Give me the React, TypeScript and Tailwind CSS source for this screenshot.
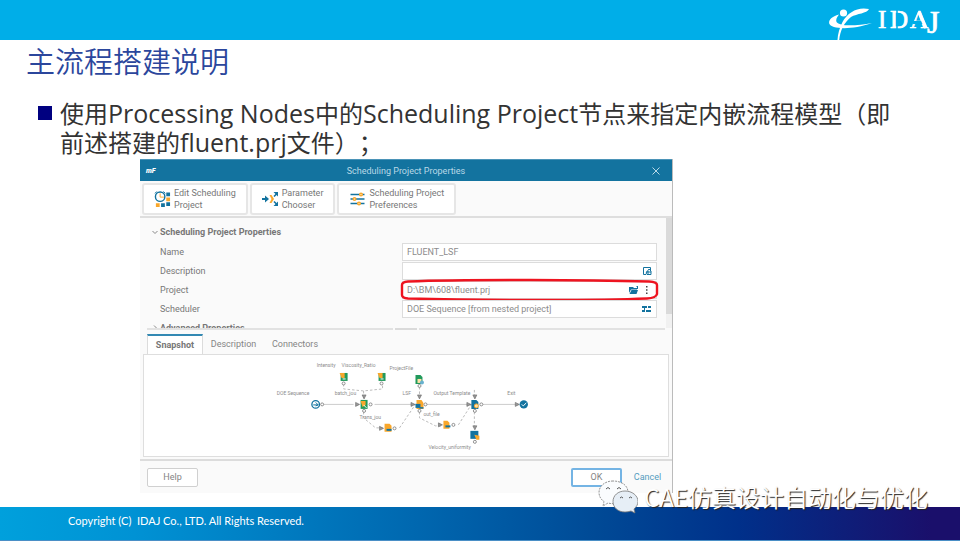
import type { ReactNode } from 'react';

const BLUE = '#13739f';
const AMBER = '#f9a72b';
const GREEN = '#229a5c';

function BrandLogo() {
  return (
    <svg viewBox="0 0 116 36" className="h-9 w-[116px]" role="img" aria-label="IDAJ">
      <circle cx="16.5" cy="9" r="3.6" fill="#fff" />
      <path d="M12 10.500C5 12.500 1.500 15.500 2.200 19.500C4 25 24 26.500 45 19C31 21.500 13 23 9.500 18C8.500 15.500 10 13 12 10.500Z" fill="#fff" />
      <path d="M42 5C31 2.500 21 8 15.500 18C12.500 24 10.800 30 10.500 36H12.200C13 27 17 18.500 24 13C30 9.500 40 9.500 42 5Z" fill="#fff" />
      <g fill="#fff" stroke="#fff" strokeWidth=".7" fontFamily="'Liberation Serif', serif">
        <text x="51 63 83" y="24" fontSize="25">IDA</text>
        <text x="100" y="29" fontSize="32">J</text>
      </g>
      <path d="M70 6V25M84 21L91 6" stroke="#00aee8" strokeWidth="1.500" />
      <path d="M86 18.500H97" stroke="#00aee8" strokeWidth="3" />
      <path d="M92 8L99 24" stroke="#fff" strokeWidth="3.200" />
    </svg>
  );
}

function EditIcon() {
  return (
    <svg viewBox="0 0 18 18" className="h-[18px] w-[17px] shrink-0" aria-hidden="true">
      <circle cx="6.500" cy="6.500" r="5" fill="#fff" stroke={BLUE} strokeWidth="1.500" />
      <path d="M6.500 3v4h4" stroke={AMBER} strokeWidth="1" fill="none" />
      <path d="M3 1L1 3M10 1l2 2" stroke={BLUE} />
      <path d="M13 2h4v4h-4zM13 12.500h4v4h-4zM7.500 13.500h4v4h-4z" fill={BLUE} />
      <path d="M13 7.500h4v4h-4zM2 13.500h4v4H2z" fill={AMBER} />
    </svg>
  );
}

function ChooserIcon() {
  return (
    <svg viewBox="0 0 17 16" className="h-4 w-[17px] shrink-0" fill="none" aria-hidden="true">
      <path d="M0 8h4" stroke={BLUE} strokeWidth="2" />
      <path d="M3 4.500L7 8l-4 3.500z" fill={BLUE} />
      <path d="M7.500 4L9.500 4 12 8 9.500 12H7.500L9.500 8z" fill={AMBER} />
      <path d="M12 5.500L14.500 3M12 10.500l2.500 2.500" stroke={BLUE} strokeWidth="1.600" />
      <path d="M11.500 1H16v4.500zM11.500 15H16v-4.500z" fill={BLUE} />
    </svg>
  );
}

function SlidersIcon() {
  return (
    <svg viewBox="0 0 14 14" className="h-[14px] w-[17px] shrink-0" aria-hidden="true">
      <path d="M0 2.500h14M0 7h14M0 11.500h14" stroke={BLUE} strokeWidth="1.500" />
      <g fill="#fff" stroke={AMBER} strokeWidth="1.500">
        <circle cx="10.500" cy="2.500" r="1.300" />
        <circle cx="4" cy="7" r="1.300" />
        <circle cx="8.500" cy="11.500" r="1.300" />
      </g>
    </svg>
  );
}

function ToolButton({ icon, lines }: { icon: ReactNode; lines: [string, string] }) {
  return (
    <button className="flex h-8 items-center gap-[3px] rounded-[3px] border-2 border-[#e6e6e6] bg-white px-[10px] text-left leading-[12px] text-[#777]">
      {icon}
      <span>
        {lines[0]}
        <br />
        {lines[1]}
      </span>
    </button>
  );
}

function Chevron({ open }: { open?: boolean }) {
  return (
    <svg viewBox="0 0 6 6" className="size-[6px]" fill="none" stroke="#888" aria-hidden="true">
      <path d={open ? 'M.5 2L3 4.500 5.500 2' : 'M2 .5L4.500 3 2 5.500'} />
    </svg>
  );
}

function Field({ id, label, value, children, marked }: { id: string; label: string; value: string; children?: ReactNode; marked?: boolean }) {
  return (
    <div className="flex h-[19px] items-center">
      <label htmlFor={id} className="w-[242px] text-[#777]">{label}</label>
      <div className="relative flex h-[18px] w-[255px] items-center border border-[#dcdcdc] bg-white pr-1 pl-1">
        <input id={id} defaultValue={value} className="min-w-0 flex-1 bg-transparent text-[#8c8c8c] outline-none" />
        <span className="flex items-center gap-1">{children}</span>
        {marked && (
          <svg viewBox="0 0 259 24" className="pointer-events-none absolute -top-[4px] -left-[3px] h-6 w-[259px] max-w-none" fill="none" aria-hidden="true">
            <path d="M8 3.500C70 1 190 2 249 3.500Q257 4 257 7V16Q256 20 247 20.500C190 23 70 22 8 20.500Q2 20 2 17V7Q2 4 8 3.500Z" stroke="#ee1420" strokeWidth="2.400" />
          </svg>
        )}
      </div>
    </div>
  );
}

function Port({ x, y }: { x: number; y: number }) {
  return <circle cx={x} cy={y} r="1.500" fill="#fff" stroke="#777" strokeWidth=".8" />;
}

function Arrow({ x, y, down }: { x: number; y: number; down?: boolean }) {
  return (
    <path
      d={down ? `M${x - 2} ${y - 2}h4l-2 4z` : `M${x - 2} ${y - 2}v4l4-2z`}
      fill="#999"
      stroke="#666"
      strokeWidth=".6"
    />
  );
}

const nodeLabels: [string, number, number][] = [
  ['Intensity', 173, 12],
  ['Viscosity_Ratio', 198, 12],
  ['ProjectFile', 246, 15],
  ['DOE Sequence', 133, 40],
  ['batch_jou', 191, 40],
  ['LSF', 259, 40],
  ['Output Template', 290, 40],
  ['Exit', 364, 40],
  ['Trans_jou', 216, 64],
  ['out_file', 280, 61],
  ['Velocity_uniformity', 285, 94],
];

function Snapshot() {
  return (
    <svg viewBox="0 0 525 102" className="h-[102px] w-full" preserveAspectRatio="xMinYMin" role="img" aria-label="Workflow snapshot">
      <path d="M179 49.500H210M231 49.500h40M283 49.500h44M339 49.500h35" stroke="#ccc" />
      <g stroke="#bbb" fill="none" strokeDasharray="2.500 2">
        <path d="M200 29v5l20 2 19-2v-5M220 36v7M220 57v6l12 10h7M256 73l17-25M276 32v10M276 57v6l16 8h7M315 70l16-25M331 35v8M331 57v17" />
      </g>
      <g fill="#8c8c8c" fontFamily="Roboto, 'Liberation Sans', sans-serif" fontSize="5">
        {nodeLabels.map(([name, x, y]) => (
          <text key={name} x={x} y={y}>{name}</text>
        ))}
      </g>

      <circle cx="172" cy="49.500" r="3.800" fill="#fff" stroke={BLUE} strokeWidth="1.300" />
      <path d="M169.500 50h5M172 47.500l2.500 2.500-2.500 1" stroke={BLUE} fill="none" />
      <Port x={178.5} y={49.5} />

      {[200, 238].map((x) => (
        <g key={x}>
          <path d={`M${x - 3} 18h7v8h-7z`} fill={GREEN} />
          <path d={`M${x - 4} 18h5v5h-3z`} fill={AMBER} />
          <path d={`M${x - 1} 24h3`} stroke="#fff" />
          <Port x={x} y={28.5} />
        </g>
      ))}

      <Arrow x={214} y={49.5} />
      <path d="M217 45h7v9h-7z" fill={GREEN} />
      <path d="M217 46h5v4l-3 2z" fill={AMBER} />
      <path d="M220 50l3 3" stroke="#fff" />
      <Arrow x={220.5} y={42} down />
      <Port x={227} y={49.5} />
      <Port x={220.5} y={56} />

      <path d="M272 20h5l2 2v7h-7z" fill={GREEN} />
      <path d="M274 24h4v4h-4z" fill="#ffe2a8" />
      <circle cx="278.500" cy="27.500" r="2" fill="#69b1cf" />
      <Port x={276} y={31} />

      <Arrow x={269.5} y={49.5} />
      <path d="M273 45h5l2 3v6h-7z" fill={AMBER} />
      <path d="M272 49h5v4h-5z" fill={BLUE} />
      <path d="M276 53h4" stroke={BLUE} strokeWidth="1.500" />
      <Arrow x={276} y={42} down />
      <Port x={282} y={49.5} />
      <Port x={276} y={56} />

      <Arrow x={238} y={73.5} />
      <path d="M241 69h5l2 2v6h-7z" fill={AMBER} />
      <path d="M243 75h5" stroke={BLUE} strokeWidth="2" />
      <Port x={251} y={73.5} />

      <Arrow x={297} y={70} />
      <path d="M300 66h4l2 2v6h-6z" fill={AMBER} />
      <path d="M302 71.500h5" stroke={BLUE} strokeWidth="2" />
      <Port x={310} y={70} />

      <Arrow x={325.5} y={49.5} />
      <path d="M328 45h5l2 2v7h-7z" fill={BLUE} />
      <circle cx="333" cy="51" r="2" fill="#ffe2a8" stroke={AMBER} />
      <Arrow x={331.5} y={42} down />
      <Port x={338} y={49.5} />
      <Port x={331.5} y={56} />

      <Arrow x={331.5} y={73} down />
      <path d="M327 76h8v8h-8z" fill={BLUE} />
      <path d="M331 80l5 1v4h-3z" fill={AMBER} />
      <Port x={331.5} y={87} />

      <Arrow x={374} y={49.5} />
      <circle cx="380.500" cy="49.500" r="4.200" fill={BLUE} />
      <path d="M378.500 49.500l1.500 1.500 3-3" stroke="#fff" fill="none" />
    </svg>
  );
}

function PropertiesDialog() {
  return (
    <section aria-label="Scheduling Project Properties" className="mt-[2px] ml-[140px] w-[533px] border-r border-[#bbb] bg-[#fafafa] font-[Roboto,'Liberation_Sans',sans-serif] text-[9px] leading-[12px]">
      <header className="grid h-[22px] grid-cols-3 items-center border-t border-[#4b94b8] bg-[#13739f] px-[6px] text-[#b9d9e7]">
        <span className="text-[7px] font-black text-white italic">mF</span>
        <h2 className="text-center whitespace-nowrap">Scheduling Project Properties</h2>
        <button aria-label="Close" className="justify-self-end px-[6px]">
          <svg viewBox="0 0 8 8" className="size-2" stroke="#b9d9e7" aria-hidden="true">
            <path d="M.5.5l7 7M7.500.5l-7 7" />
          </svg>
        </button>
      </header>

      <div className="flex h-[37px] items-center gap-[2px] border-b-2 border-[#dedede] px-[2px]">
        <ToolButton icon={<EditIcon />} lines={['Edit Scheduling', 'Project']} />
        <ToolButton icon={<ChooserIcon />} lines={['Parameter', 'Chooser']} />
        <ToolButton icon={<SlidersIcon />} lines={['Scheduling Project', 'Preferences']} />
      </div>

      <div className="flex h-[110px] overflow-hidden">
        <div className="flex-1 pt-1 pl-5">
          <h3 className="-ml-2 flex h-5 items-center gap-[2px] font-bold text-[#777]">
            <Chevron open />
            Scheduling Project Properties
          </h3>
          <Field id="name" label="Name" value="FLUENT_LSF" />
          <Field id="description" label="Description" value="">
            <svg viewBox="0 0 9 8" className="h-2 w-[9px]" fill="none" stroke={BLUE} aria-hidden="true">
              <path d="M3 7.500H.5V.5h7V3" />
              <path d="M3 6l3-4 2 2v3.500H4zM5 4v3M3 5h5" />
            </svg>
          </Field>
          <Field id="project" label="Project" value="D:\BM\608\fluent.prj" marked>
            <svg viewBox="0 0 10 8" className="h-2 w-[10px]" fill={BLUE} aria-hidden="true">
              <path d="M0 1h4l1 1h3v1.500H2L0 7zM2.500 4H9L7.500 8H.5zM7 0h2v3H8V1z" />
            </svg>
            <svg viewBox="0 0 9 8" className="h-2 w-[9px]" fill="#444" aria-hidden="true">
              <path d="M3 0h1.500v1.500H3zM3 3.200h1.500v1.500H3zM3 6.500h1.500V8H3z" />
            </svg>
          </Field>
          <Field id="scheduler" label="Scheduler" value="DOE Sequence [from nested project]">
            <svg viewBox="0 0 10 8" className="h-2 w-[10px]" fill={BLUE} aria-hidden="true">
              <path d="M0 1h5v2H0zM6 1h3v2H6zM0 5h3v2H0zM4 5h5v2H4zM2 3h1v2H2z" />
            </svg>
          </Field>
          <h3 className="-ml-2 flex h-5 items-center gap-[2px] font-bold text-[#777]">
            <Chevron />
            Advanced Properties
          </h3>
        </div>
        <div className="w-[6px] bg-[#f1f1f1]">
          <div className="h-24 bg-[#dadada]" />
        </div>
      </div>

      <div className="mx-[7px] flex h-[6px] items-start gap-[2px]">
        <span className="h-[2px] flex-1 bg-[#e2e2e2]" />
        <span className="h-[2px] w-[22px] bg-[#dadada]" />
        <span className="h-[2px] flex-1 bg-[#e2e2e2]" />
      </div>

      <div role="tablist" className="flex h-5 pl-[7px] text-[#858585]">
        <button role="tab" aria-selected="true" className="w-14 border-x border-t-2 border-x-[#dcdcdc] border-t-[#3389b3] bg-white font-bold text-[#777]">Snapshot</button>
        <button role="tab" aria-selected="false" className="w-[61px]">Description</button>
        <button role="tab" aria-selected="false" className="w-[62px]">Connectors</button>
      </div>
      <div className="mr-[3px] ml-[3px] h-[103px] border border-[#dedede] bg-white">
        <Snapshot />
      </div>

      <footer className="mt-[2px] flex h-[34px] items-center border-t-2 border-[#dcdcdc] px-[7px] text-[#858585]">
        <button className="h-[19px] w-[51px] rounded-[2px] border border-[#d0d0d0] bg-white">Help</button>
        <button className="ml-auto h-[19px] w-[51px] rounded-[2px] border-2 border-[#74b4e4] bg-white">OK</button>
        <button className="w-[43px] pl-2 text-[#559cbf]">Cancel</button>
      </footer>
    </section>
  );
}

function ChannelMark() {
  return (
    <div className="absolute right-8 bottom-[27px] flex items-center gap-[6px]">
      <svg viewBox="0 0 40 34" className="h-[34px] w-10" aria-hidden="true">
        <g fill="#fafcfe" stroke="#777" strokeWidth=".8">
          <path d="M15 1C7 1 1 6 1 12.500c0 4 2 7 5 9L5 26l5-3c12 3 20-3 20-10.500S23 1 15 1Z" strokeDasharray="2 1" />
          <path d="M27 11c-7 0-12 4.500-12 10.500S20 32 27 32c2 0 4-.3 6-1l4 2-1-4c2-2 4-4 4-7.500C40 15.500 34 11 27 11Z" fill="#e6eef6" />
        </g>
        <path d="M8 9q2-3 4 0M19 9q2-3 4 0M22 18q1.500-2 3 0M31 18q1.500-2 3 0" fill="none" stroke="#555" />
      </svg>
      <span className="font-['Noto_Sans_CJK_SC',sans-serif] text-[24px] leading-[32px] font-[350] whitespace-nowrap text-white [text-shadow:1px_1px_1px_#222]">CAE仿真设计自动化与优化</span>
    </div>
  );
}

function Latin({ children }: { children: ReactNode }) {
  return <span className="text-[25px]">{children}</span>;
}

export default function App() {
  return (
    <div className="relative flex min-h-screen flex-col bg-white font-['Open_Sans','Noto_Sans_CJK_SC',sans-serif]">
      <header className="flex h-10 items-end justify-end bg-[#00aee8] pr-[17px]">
        <BrandLogo />
      </header>
      <main>
        <h1 className="pl-[26px] font-['Noto_Sans_CJK_SC',sans-serif] text-[29px] leading-[40px] font-[350] text-[#2b469c]">主流程搭建说明</h1>
        <ul className="pt-[19px] pl-[38px] text-[24px] leading-[29px] text-[#333] [text-spacing-trim:space-all]">
          <li className="flex gap-2">
            <span className="mt-[7px] size-[14px] shrink-0 bg-[#000080]" />
            <span>
              使用<Latin>Processing Nodes</Latin>中的<Latin>Scheduling Project</Latin>节点来指定内嵌流程模型（即
              <br />
              前述搭建的<Latin>fluent.prj</Latin>文件）；
            </span>
          </li>
        </ul>
        <PropertiesDialog />
      </main>
      <footer className="mt-auto flex h-[34px] items-center border-b border-[#4a8fc6] bg-[linear-gradient(90deg,#00a0dc_0%,#0092d4_14%,#0068b0_43%,#004a96_62%,#00308a_77%,#1a0f6b_97%)] pb-1 pl-[68px] font-[Lato,sans-serif] text-[11px] text-white">
        <span className="whitespace-pre">Copyright (C)  IDAJ Co., LTD. All Rights Reserved.</span>
      </footer>
      <ChannelMark />
    </div>
  );
}
